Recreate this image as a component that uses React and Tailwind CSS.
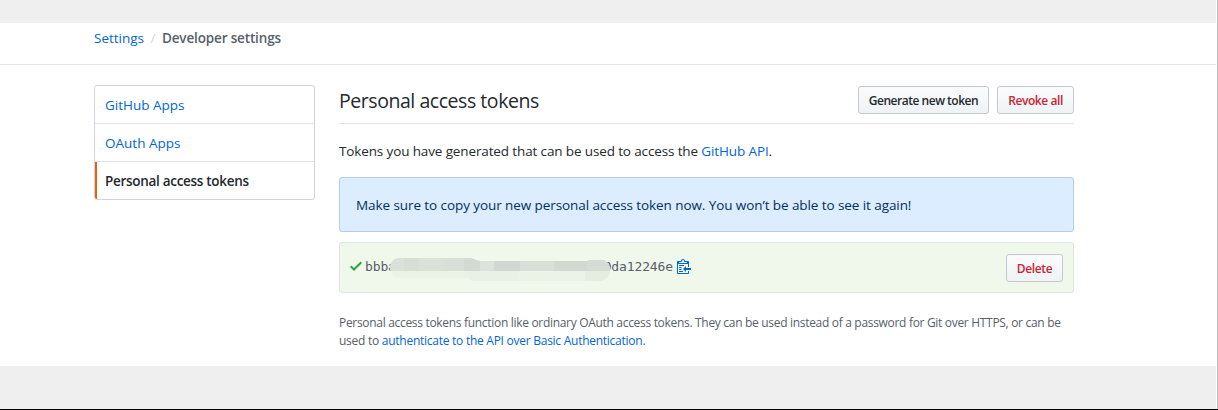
import React from "react";

const menu = ["GitHub Apps", "OAuth Apps"];

function Button({ children, className }) {
  return (
    <button
      className={`flex h-[28px] items-center justify-center rounded-[3px] border border-[#c5c9cd] bg-linear-to-b from-[#fafbfc] to-[#eff3f6] pt-px text-[12px] leading-[20px] font-semibold whitespace-nowrap ${className}`}
    >
      {children}
    </button>
  );
}

function CheckIcon() {
  return (
    <svg width="12" height="16" viewBox="0 0 12 16" fill="#28a745" className="shrink-0">
      <path d="M12 5l-8 8-4-4 1.5-1.5L4 10l6.5-6.5L12 5z" />
    </svg>
  );
}

function ClippyIcon() {
  return (
    <svg width="14" height="16" viewBox="0 0 14 16" fill="#0366d6" className="shrink-0">
      <path
        fillRule="evenodd"
        d="M2 13h4v1H2v-1zm5-6H2v1h5V7zm2 3V8l-3 3 3 3v-2h5v-2H9zM4.5 9H2v1h2.5V9zM2 12h2.5v-1H2v1zm9 1h1v2c-.02.28-.11.52-.3.7-.19.18-.42.28-.7.3H1c-.55 0-1-.45-1-1V4c0-.55.45-1 1-1h3c0-1.11.89-2 2-2 1.11 0 2 .89 2 2h3c.55 0 1 .45 1 1v5h-1V6H1v9h10v-2zM2 5h8c0-.55-.45-1-1-1H8c-.55 0-1-.45-1-1s-.45-1-1-1-1 .45-1 1-.45 1-1 1H3c-.55 0-1 .45-1 1z"
      />
    </svg>
  );
}

function Smudge() {
  return (
    <svg width="220" height="24" viewBox="0 0 220 24" className="absolute top-[-1px] left-[25px]">
      <defs>
        <clipPath id="smudge">
          <path d="M0 10C1 5 4 1 9 1H79C84 1 86 4 90 4H197L200 3H212C217 3 220 8 220 13S216 24 209 24H85C81 24 80 21 76 21H10C4 21 0 16 0 10Z" />
        </clipPath>
      </defs>
      <g clipPath="url(#smudge)">
        <rect width="220" height="24" fill="#eaf3e6" />
        <rect x="78" y="14" width="50" height="10" fill="#e7f1e5" />
        <rect x="150" y="14" width="45" height="10" fill="#ebf3e8" />
        <rect x="195" y="14" width="25" height="10" fill="#e5ede1" />
        <rect width="220" height="14" fill="#dae1d8" />
        <rect x="14" width="15" height="14" fill="#d7ded5" />
        <rect x="54" width="20" height="14" fill="#d8dfd6" />
        <rect x="74" width="16" height="14" fill="#d4dad2" />
        <rect x="90" width="14" height="14" fill="#dce3da" />
        <rect x="104" width="26" height="14" fill="#d3d9d2" />
        <rect x="130" width="34" height="14" fill="#d9dfd7" />
        <rect x="164" width="33" height="14" fill="#d2d9d1" />
        <rect x="197" width="23" height="14" fill="#d5dcd3" />
      </g>
    </svg>
  );
}

export default function App() {
  return (
    <div className="flex h-[410px] w-[1218px] flex-col border-b border-black bg-white font-['Open_Sans','Noto_Sans',sans-serif] text-[14px] leading-[21px] text-[#24292e]">
      <div className="flex min-h-0 flex-1 flex-col border-r border-[#bdbdbd] pr-px">
        <div className="h-[23px] bg-[#efefef]" />
        <header className="flex h-[42px] items-start border-b border-[#e1e4e8] pt-[5px] pl-[94px] text-[13.5px] whitespace-nowrap">
          <a className="w-[50px] text-[#0366d6]">Settings</a>
          <span className="w-[18px] text-center text-[#d1d5da]">/</span>
          <span className="font-semibold tracking-[-0.15px] text-[#586069]">Developer settings</span>
        </header>

        <div className="flex h-[301px] gap-[24px] pt-[20px] pl-[94px]">
          <nav className="flex h-[115px] w-[221px] shrink-0 flex-col overflow-hidden rounded-[3px] border border-[#d1d5da] text-[13.5px]">
            {menu.map((label) => (
              <a
                key={label}
                className="flex h-[38px] items-center border-b border-[#e1e4e8] pt-[2px] pl-[10px] text-[#0366d6]"
              >
                {label}
              </a>
            ))}
            <a className="flex flex-1 items-center border-l-2 border-[#e36209] pt-[2px] pl-[8px] font-semibold tracking-[-0.3px]">
              Personal access tokens
            </a>
          </nav>

          <main className="flex w-[735px] shrink-0 flex-col">
            <div className="flex h-[39px] items-start border-b border-[#e1e4e8] pt-px">
              <h2 className="flex-1 text-[19.5px] leading-[30px] tracking-[-0.45px]">Personal access tokens</h2>
              <div className="flex gap-[8px]">
                <Button className="w-[131px] tracking-[-0.48px]">Generate new token</Button>
                <Button className="w-[77px] tracking-[-0.42px] text-[#cb2431]">Revoke all</Button>
              </div>
            </div>

            <p className="mt-[17px] text-[13.5px] tracking-[-0.13px] whitespace-nowrap">
              Tokens you have generated that can be used to access the <a className="text-[#0366d6]">GitHub API</a>.
            </p>

            <div className="mt-[15px] flex h-[55px] items-center rounded-[3px] border border-[#b9cde0] bg-[#dbedff] pt-[2px] pl-[16px] text-[13.5px] tracking-[-0.08px] whitespace-nowrap text-[#032f62]">
              Make sure to copy your new personal access token now. You won’t be able to see it again!
            </div>

            <div className="mt-[10px] flex h-[51px] items-start justify-between rounded-[3px] border border-[#dfe5df] bg-[#f0f8ec] pt-[11px] pr-[10px] pl-[10px]">
              <div className="flex items-start pt-[4px]">
                <CheckIcon />
                <code className="relative mr-[4px] ml-[3px] flex w-[308px] justify-between font-['DejaVu_Sans_Mono',monospace] text-[13px] leading-[18px] tracking-[-0.12px] text-[#586069]">
                  <span>bbba</span>
                  <span>9da12246e</span>
                  <Smudge />
                </code>
                <ClippyIcon />
              </div>
              <Button className="w-[57px] tracking-[-0.35px] text-[#cb2431]">Delete</Button>
            </div>

            <p className="mt-[21px] text-[12px] leading-[18px] tracking-[-0.31px] whitespace-nowrap text-[#586069]">
              Personal access tokens function like ordinary OAuth access tokens. They can be used instead of a password for Git over HTTPS, or can be
              <br />
              <span className="tracking-[-0.26px]">
                used to <a className="text-[#0366d6]">authenticate to the API over Basic Authentication</a>.
              </span>
            </p>
          </main>
        </div>
        <footer className="flex-1 bg-[#efefef]" />
      </div>
    </div>
  );
}
